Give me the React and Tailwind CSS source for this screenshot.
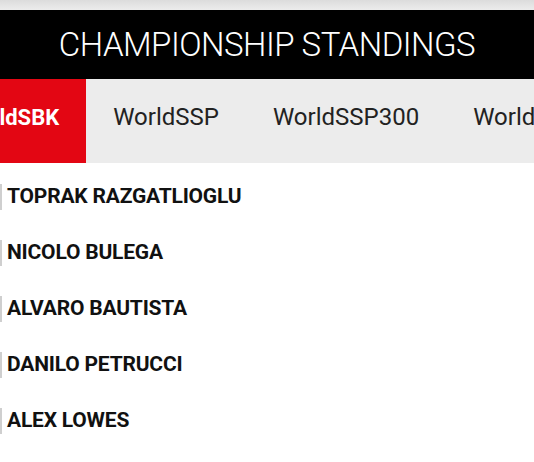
import { useState } from "react";

const tabs = ["WorldSBK", "WorldSSP", "WorldSSP300", "WorldWCR"];

const riders = [
  "TOPRAK RAZGATLIOGLU",
  "NICOLO BULEGA",
  "ALVARO BAUTISTA",
  "DANILO PETRUCCI",
  "ALEX LOWES",
];

function App() {
  const [activeTab, setActiveTab] = useState(0);

  return (
    <div className="w-[534px] h-[462px] overflow-hidden bg-white font-['Roboto',sans-serif]">
      <div className="h-[10px] bg-gradient-to-b from-[#dcdcdc] to-[#ececec]" />
      <div className="h-[69px] bg-black flex items-center justify-center">
        <h1 className="text-white text-[33px] font-light tracking-[-0.5px] leading-none">
          CHAMPIONSHIP STANDINGS
        </h1>
      </div>

      <div className="h-[84px] bg-[#ececec] overflow-hidden">
        <div className="flex h-full -ml-[67px]">
          {tabs.map((tab, i) => (
            <button
              key={tab}
              onClick={() => setActiveTab(i)}
              className={
                "h-full px-[27px] pb-[8px] whitespace-nowrap " +
                (activeTab === i
                  ? "bg-[#e30613] text-white text-[22px] font-bold"
                  : "text-[#222] text-[24px] font-normal")
              }
            >
              {tab}
            </button>
          ))}
        </div>
      </div>

      <div className="pt-[6px]">
        {riders.map((name) => (
          <div key={name} className="h-[56px] flex items-center">
            <div className="w-[2px] h-[26px] bg-[#cfcfcf]" />
            <span className="ml-[5px] text-[21px] font-bold text-[#111] tracking-[-0.2px]">
              {name}
            </span>
          </div>
        ))}
      </div>
    </div>
  );
}

export default App;
